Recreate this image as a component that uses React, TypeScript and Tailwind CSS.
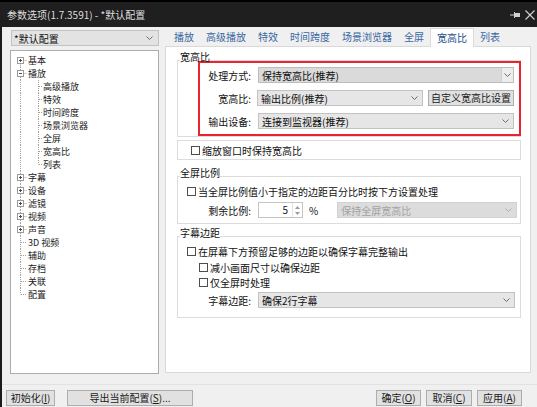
import React from "react";

type Node = { label: string; kids?: string[]; open?: boolean };

const tree: Node[] = [
  { label: "基本", kids: ["x"] },
  { label: "播放", kids: ["高级播放", "特效", "时间跨度", "场景浏览器", "全屏", "宽高比", "列表"], open: true },
  { label: "字幕", kids: ["x"] },
  { label: "设备", kids: ["x"] },
  { label: "滤镜", kids: ["x"] },
  { label: "视频", kids: ["x"] },
  { label: "声音", kids: ["x"] },
  { label: "3D 视频" },
  { label: "辅助" },
  { label: "存档" },
  { label: "关联" },
  { label: "配置" },
];

const tabs = ["播放", "高级播放", "特效", "时间跨度", "场景浏览器", "全屏", "宽高比", "列表"];

const Chevron = ({ color = "#6b6b6b" }: { color?: string }) => (
  <svg width="7" height="4" viewBox="0 0 7 4" className="shrink-0">
    <path d="M0.5 0.5 L3.5 3.5 L6.5 0.5" fill="none" stroke={color} strokeWidth="1" />
  </svg>
);

// dotted tree connector for root level
const RootCell = ({ first, last, expander, open, through }: { first?: boolean; last?: boolean; expander?: boolean; open?: boolean; through?: boolean }) => (
  <svg width="14" height="13" viewBox="0 0 14 13" className="shrink-0">
    {through ? (
      <line x1="7.5" y1="0" x2="7.5" y2="13" stroke="#a0a0a0" strokeDasharray="1 1" />
    ) : (
      <>
        <line x1="7.5" y1={first ? 6.5 : 0} x2="7.5" y2={last ? 6.5 : 13} stroke="#a0a0a0" strokeDasharray="1 1" />
        <line x1={expander ? 10.5 : 8} y1="6.5" x2="14" y2="6.5" stroke="#a0a0a0" strokeDasharray="1 1" />
        {expander && (
          <>
            <rect x="4.5" y="3.5" width="6" height="6" fill="#fff" stroke="#9a9a9a" />
            <line x1="6" y1="6.5" x2="9" y2="6.5" stroke="#4a4a4a" />
            {!open && <line x1="7.5" y1="5" x2="7.5" y2="8" stroke="#4a4a4a" />}
          </>
        )}
      </>
    )}
  </svg>
);

const ChildCell = ({ last }: { last?: boolean }) => (
  <svg width="15" height="13" viewBox="0 0 15 13" className="shrink-0">
    <line x1="11.5" y1="0" x2="11.5" y2={last ? 6.5 : 13} stroke="#a0a0a0" strokeDasharray="1 1" />
    <line x1="12" y1="6.5" x2="15" y2="6.5" stroke="#a0a0a0" strokeDasharray="1 1" />
  </svg>
);

const Tree = () => (
  <div className="h-[324px] bg-white border border-[#acacac] pt-[3px] pl-[2px] text-[9px] leading-[13px] text-[#1a1a1a]">
    {tree.map((n, i) => (
      <React.Fragment key={n.label}>
        <div className="flex items-center h-[13px]">
          <RootCell first={i === 0} last={i === tree.length - 1} expander={!!n.kids} open={n.open} />
          <span className="ml-[1px] whitespace-nowrap">{n.label}</span>
        </div>
        {n.open &&
          n.kids!.map((k, j) => (
            <div key={k} className="flex items-center h-[13px]">
              <RootCell through />
              <ChildCell last={j === n.kids!.length - 1} />
              <span className="ml-[1px] whitespace-nowrap">{k}</span>
            </div>
          ))}
      </React.Fragment>
    ))}
  </div>
);

const Select = ({ text, className = "", split, disabled }: { text: string; className?: string; split?: boolean; disabled?: boolean }) => {
  if (split) {
    return (
      <div className={`h-[16px] flex border border-[#bcbcbc] ${className}`}>
        <div className="flex-1 bg-[#dadada] flex items-center pl-[3px] whitespace-nowrap">{text}</div>
        <div className="w-[12px] bg-[#ededed] border-l border-[#cfcfcf] flex items-center justify-center">
          <Chevron />
        </div>
      </div>
    );
  }
  return (
    <div
      className={`h-[16px] flex items-center justify-between pl-[3px] pr-[4px] border whitespace-nowrap ${
        disabled ? "bg-[#dcdcdc] border-[#d2d2d2] text-[#a3a3a3]" : "bg-[#e6e6e6] border-[#c2c2c2]"
      } ${className}`}
    >
      <span>{text}</span>
      <Chevron color={disabled ? "#b0b0b0" : "#6b6b6b"} />
    </div>
  );
};

const Check = ({ label, className = "" }: { label: string; className?: string }) => (
  <div className={`h-[12px] flex items-center ${className}`}>
    <div className="w-[9px] h-[9px] border border-[#4d4d4d] bg-white shrink-0" />
    <span className="ml-[2px] whitespace-nowrap">{label}</span>
  </div>
);

const Btn = ({ children, className = "" }: { children: React.ReactNode; className?: string }) => (
  <div className={`h-[16px] border border-[#adadad] bg-[#e1e1e1] flex items-center justify-center text-[10px] leading-none text-[#1a1a1a] whitespace-nowrap ${className}`}>
    {children}
  </div>
);

const Legend = ({ children }: { children: React.ReactNode }) => (
  <legend className="ml-[2px] px-0 pb-[6px] text-[10px] leading-[12px]">{children}</legend>
);

const Spinner = () => (
  <div className="w-[45px] h-[16px] bg-white border border-[#c4c4c4] flex ml-[7px]">
    <div className="flex-1 text-right pr-[4px] leading-[14px]">5</div>
    <div className="w-[10px] flex flex-col items-center justify-center gap-[3px] border-l border-[#e3e3e3]">
      <svg width="5" height="3" viewBox="0 0 5 3">
        <path d="M0 3 L2.5 0 L5 3 Z" fill="#9a9a9a" />
      </svg>
      <svg width="5" height="3" viewBox="0 0 5 3">
        <path d="M0 0 L2.5 3 L5 0 Z" fill="#9a9a9a" />
      </svg>
    </div>
  </div>
);

const App = () => {
  return (
    <div className="w-[537px] h-[407px] overflow-hidden flex flex-col bg-[#f0f0f0] font-['Noto_Sans_CJK_SC','Noto_Sans',sans-serif] text-[10px] text-[#111]">
      {/* title bar */}
      <div className="h-[27px] shrink-0 bg-[#1f1f1f] border-t-2 border-black flex items-center pl-[7px] pr-[2px] text-[#dedede]">
        <span className="flex-1 whitespace-nowrap">参数选项(1.7.3591) - *默认配置</span>
        <svg width="11" height="8" viewBox="0 0 11 8" className="mr-[4px]">
          <line x1="0" y1="4" x2="4" y2="4" stroke="#cfcfcf" />
          <line x1="4.5" y1="1" x2="4.5" y2="7" stroke="#cfcfcf" />
          <rect x="5" y="2" width="5" height="4" fill="#cfcfcf" />
        </svg>
        <svg width="10" height="10" viewBox="0 0 10 10">
          <path d="M0.5 0.5 L9.5 9.5 M9.5 0.5 L0.5 9.5" stroke="#d4d4d4" strokeWidth="1.1" />
        </svg>
      </div>

      <div className="flex-1 flex flex-col border-l-2 border-[#1b1b1b]">
        <div className="flex pt-[1px]">
          {/* left column */}
          <div className="ml-[8px] w-[149px] flex flex-col pt-[2px]">
            <div className="ml-[1px] h-[16px] bg-[#e3e3e3] border border-[#c2c2c2] flex items-center justify-between pl-[2px] pr-[5px]">
              <span>*默认配置</span>
              <Chevron />
            </div>
            <div className="mt-[4px]">
              <Tree />
            </div>
          </div>

          {/* right column */}
          <div className="ml-[6px] w-[366px] flex flex-col">
            <div className="h-[18px] flex items-end pl-[3px]">
              {tabs.map((t) =>
                t === "宽高比" ? (
                  <div key={t} className="relative z-10 -mb-px h-[19px] px-[6px] bg-white border border-b-0 border-[#d9d9d9] leading-[18px] text-[#24518a]">
                    {t}
                  </div>
                ) : (
                  <div key={t} className="h-[18px] px-[6px] leading-[18px] text-[#3a67a2] whitespace-nowrap">
                    {t}
                  </div>
                )
              )}
            </div>
            <div className="h-[327px] bg-white border border-[#d9d9d9] pl-[11px] pr-[9px] pt-[4px]">
              {/* 宽高比 */}
              <fieldset className="border border-[#dcdcdc] min-w-0">
                <Legend>宽高比</Legend>
                <div className="-mt-[8px] ml-[20px] -mr-[1px] border-2 border-[#e8252f] pt-[4px] pb-[5px] pr-[5px] flex flex-col gap-[7px]">
                  <div className="flex items-center">
                    <div className="w-[51px] text-right">处理方式:</div>
                    <Select text="保持宽高比(推荐)" split className="ml-[7px] flex-1" />
                  </div>
                  <div className="flex items-center">
                    <div className="w-[51px] text-right">宽高比:</div>
                    <Select text="输出比例(推荐)" className="ml-[6px] flex-1" />
                    <Btn className="ml-[5px] w-[86px]">自定义宽高比设置</Btn>
                  </div>
                  <div className="flex items-center">
                    <div className="w-[51px] text-right">输出设备:</div>
                    <Select text="连接到监视器(推荐)" className="ml-[7px] flex-1" />
                  </div>
                </div>
              </fieldset>
              <div className="mt-[3px] h-[20px] border border-[#dcdcdc] flex items-center pl-[13px]">
                <Check label="缩放窗口时保持宽高比" />
              </div>

              {/* 全屏比例 */}
              <fieldset className="mt-[7px] border border-[#dcdcdc] pb-[5px] min-w-0">
                <Legend>全屏比例</Legend>
                <Check label="当全屏比例值小于指定的边距百分比时按下方设置处理" className="pl-[9px]" />
                <div className="mt-[5px] flex items-center pr-[3px]">
                  <div className="w-[73px] text-right">剩余比例:</div>
                  <Spinner />
                  <span className="ml-[6px]">%</span>
                  <Select text="保持全屏宽高比" disabled className="ml-[19px] flex-1" />
                </div>
              </fieldset>

              {/* 字幕边距 */}
              <fieldset className="mt-[3px] border border-[#dcdcdc] pb-[9px] min-w-0">
                <Legend>字幕边距</Legend>
                <Check label="在屏幕下方预留足够的边距以确保字幕完整输出" className="pl-[9px]" />
                <Check label="减小画面尺寸以确保边距" className="pl-[21px] mt-[4px]" />
                <Check label="仅全屏时处理" className="pl-[21px] mt-[3px]" />
                <div className="mt-[4px] flex items-center pr-[5px]">
                  <div className="w-[73px] text-right">字幕边距:</div>
                  <Select text="确保2行字幕" className="ml-[7px] flex-1" />
                </div>
              </fieldset>
            </div>
          </div>
        </div>

        <div className="mt-[10px] h-px bg-[#e2e2e2]" />

        <div className="mt-[5px] flex items-center pl-[4px] pr-[15px]">
          <Btn className="w-[49px]">
            初始化(<span className="underline">I</span>)
          </Btn>
          <Btn className="ml-[12px] w-[126px]">
            导出当前配置(<span className="underline">S</span>)...
          </Btn>
          <div className="flex-1" />
          <Btn className="w-[45px]">
            确定(<span className="underline">O</span>)
          </Btn>
          <Btn className="ml-[5px] w-[46px]">
            取消(<span className="underline">C</span>)
          </Btn>
          <Btn className="ml-[5px] w-[45px]">
            应用(<span className="underline">A</span>)
          </Btn>
        </div>
      </div>
    </div>
  );
};

export default App;
